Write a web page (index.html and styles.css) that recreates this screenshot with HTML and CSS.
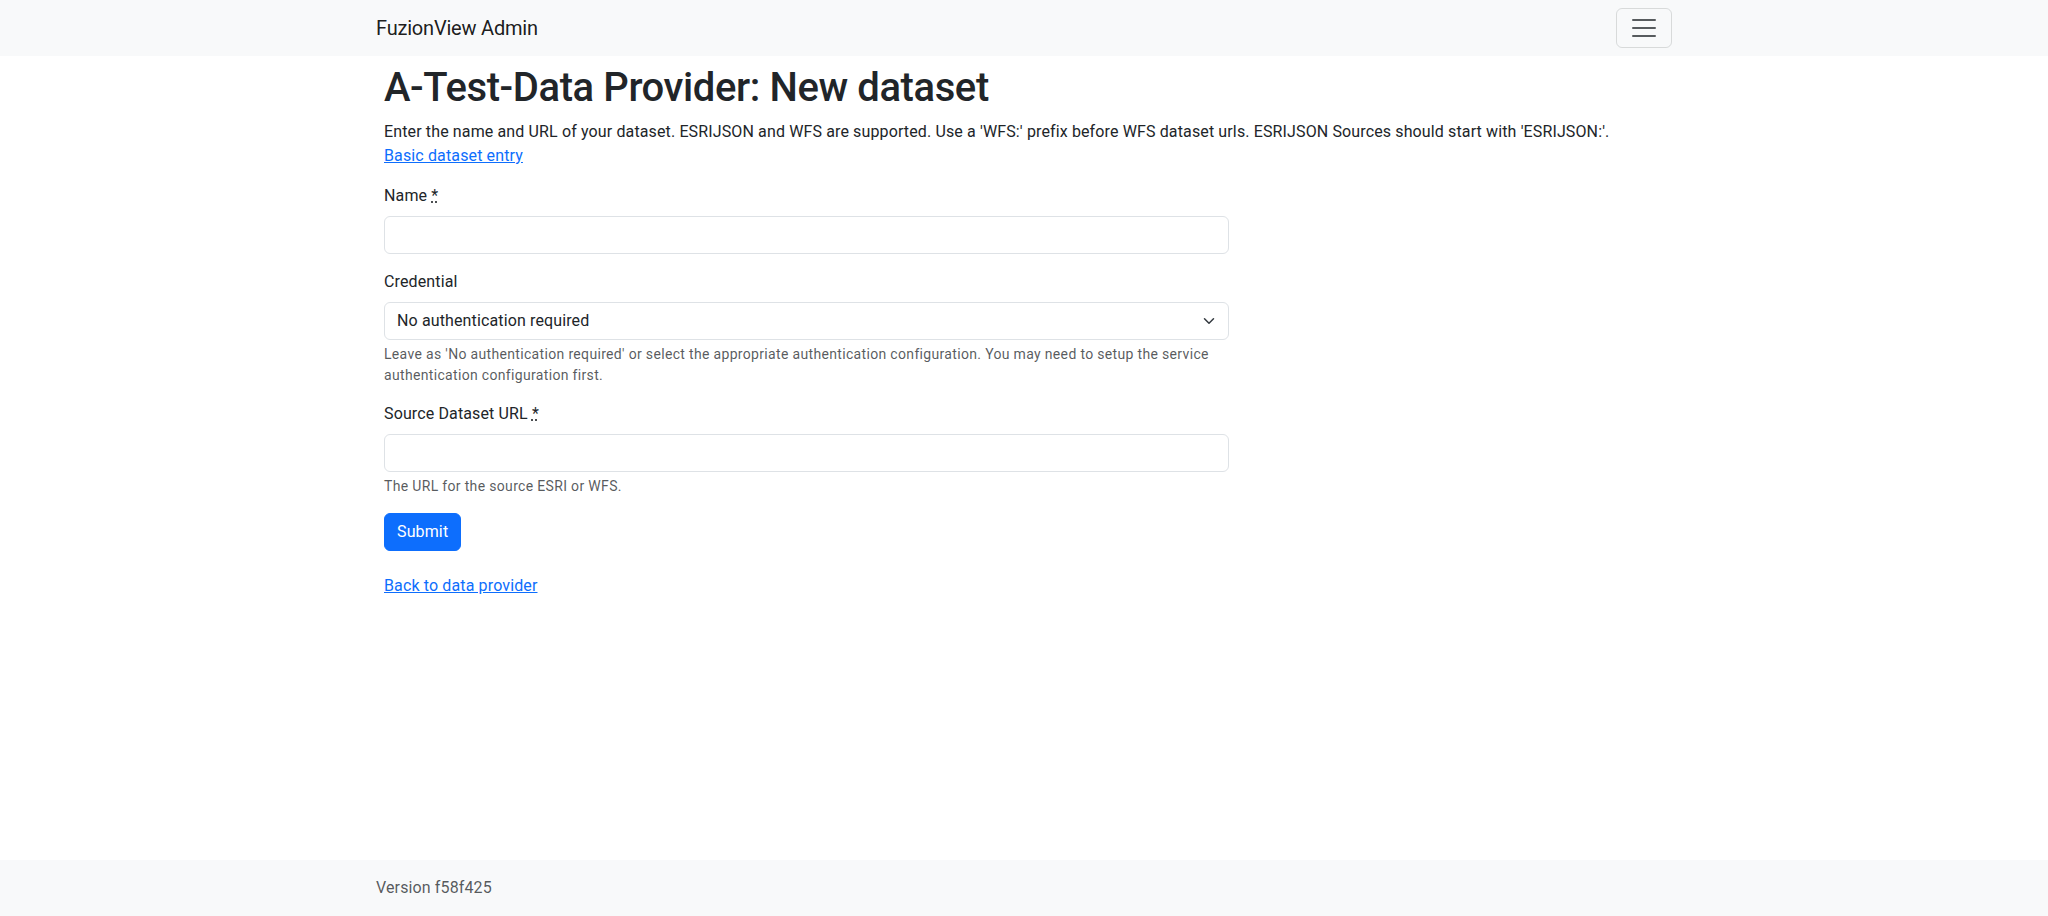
FILE: index.html
```html
<!DOCTYPE html>
<html lang="en">
<head>
<meta charset="utf-8">
<title>FuzionView Admin</title>
<link rel="stylesheet" href="styles.css">
</head>
<body>
<div class="page">
  <nav class="navbar">
    <div class="container nav-inner">
      <a class="brand" href="#">FuzionView Admin</a>
      <button class="toggler" type="button" aria-label="Toggle navigation">
        <svg class="toggler-icon" viewBox="0 0 30 30" width="30" height="30" aria-hidden="true">
          <path d="M4 7h22M4 15h22M4 23h22" fill="none" stroke="rgba(33,37,41,0.75)" stroke-width="2" stroke-linecap="round" stroke-miterlimit="10"/>
        </svg>
      </button>
    </div>
  </nav>

  <main class="container main">
    <div class="content">
      <h1 class="title">A-Test-Data Provider: New dataset</h1>
      <p class="intro">Enter the name and URL of your dataset. ESRIJSON and WFS are supported. Use a 'WFS:' prefix before WFS dataset urls. ESRIJSON Sources should start with 'ESRIJSON:'.<br><a href="#">Basic dataset entry</a></p>

      <form class="form">
        <div class="field">
          <label class="label" for="name">Name <abbr title="required">*</abbr></label>
          <input class="control" id="name" type="text">
        </div>
        <div class="field">
          <label class="label" for="cred">Credential</label>
          <div class="select-wrap">
            <select class="control select" id="cred">
              <option>No authentication required</option>
            </select>
            <svg class="chevron" viewBox="0 0 16 16" width="16" height="12" aria-hidden="true">
              <path d="m2 5 6 6 6-6" fill="none" stroke="#343a40" stroke-linecap="round" stroke-linejoin="round" stroke-width="2"/>
            </svg>
          </div>
          <div class="help">Leave as 'No authentication required' or select the appropriate authentication configuration. You may need to setup the service authentication configuration first.</div>
        </div>
        <div class="field">
          <label class="label" for="url">Source Dataset URL <abbr title="required">*</abbr></label>
          <input class="control" id="url" type="text">
          <div class="help">The URL for the source ESRI or WFS.</div>
        </div>
        <button class="btn" type="submit">Submit</button>
      </form>

      <p class="back"><a href="#">Back to data provider</a></p>
    </div>
  </main>

  <footer class="footer">
    <div class="container">
      <span class="version">Version f58f425</span>
    </div>
  </footer>
</div>
</body>
</html>
```

FILE: styles.css
```css
* { box-sizing: border-box; }

html, body {
  margin: 0;
  padding: 0;
}

body {
  font-family: Roboto, "Noto Sans", "Liberation Sans", sans-serif;
  font-size: 16px;
  line-height: 1.5;
  letter-spacing: 0.13px;
  color: #212529;
  background: #fff;
}

.page {
  height: 916px;
  display: flex;
  flex-direction: column;
  overflow: hidden;
}

.container {
  width: 100%;
  max-width: 1320px;
  margin: 0 auto;
  padding: 0 12px;
}

a { color: #0d6efd; text-decoration: underline; }

.navbar {
  background: #f8f9fa;
  padding: 8px 0;
}

.nav-inner {
  display: flex;
  align-items: center;
  justify-content: space-between;
}

.brand {
  font-size: 20px;
  line-height: 30px;
  padding: 5px 0;
  letter-spacing: -0.2px;
  color: rgba(0, 0, 0, 0.9);
  text-decoration: none;
  margin-right: 16px;
}

.toggler {
  width: 56px;
  height: 40px;
  padding: 4px 12px;
  background: transparent;
  border: 1px solid rgba(33, 37, 41, 0.15);
  border-radius: 6px;
  display: flex;
  align-items: center;
  justify-content: center;
}

.toggler-icon { display: block; }

.main {
  flex: 1 0 auto;
}

.content {
  padding: 8px;
}

.title {
  font-size: 40px;
  font-weight: 500;
  line-height: 1.2;
  letter-spacing: -0.4px;
  margin: 0 0 8px;
}

.intro {
  margin: 0 0 16px;
}

.form {
  width: calc((100% + 24px) * 2 / 3 - 24px);
}

.field {
  margin-bottom: 16px;
}

.label {
  display: inline-block;
  margin-bottom: 8px;
}

abbr[title] {
  text-decoration: underline dotted;
  cursor: help;
}

.control {
  display: block;
  width: 100%;
  height: 38px;
  padding: 6px 12px;
  font: inherit;
  font-size: 16px;
  line-height: 1.5;
  letter-spacing: 0.13px;
  color: #212529;
  background: #fff;
  border: 1px solid #dee2e6;
  border-radius: 6px;
  appearance: none;
  -webkit-appearance: none;
}

.select-wrap {
  position: relative;
}

.select {
  padding-right: 36px;
}

.chevron {
  position: absolute;
  right: 12px;
  top: 13px;
  pointer-events: none;
}

.help {
  margin-top: 4px;
  font-size: 14px;
  line-height: 1.5;
  letter-spacing: 0.33px;
  color: rgba(33, 37, 41, 0.75);
}

.btn {
  display: inline-block;
  padding: 6px 12px;
  font: inherit;
  font-size: 16px;
  line-height: 1.5;
  letter-spacing: 0.13px;
  color: #fff;
  background: #0d6efd;
  border: 1px solid #0d6efd;
  border-radius: 6px;
}

.back {
  margin: 23px 0 16px;
}

.footer {
  background: #f8f9fa;
  padding: 16px 0;
  flex: 0 0 56px;
}

.version {
  color: rgba(33, 37, 41, 0.75);
}
```
